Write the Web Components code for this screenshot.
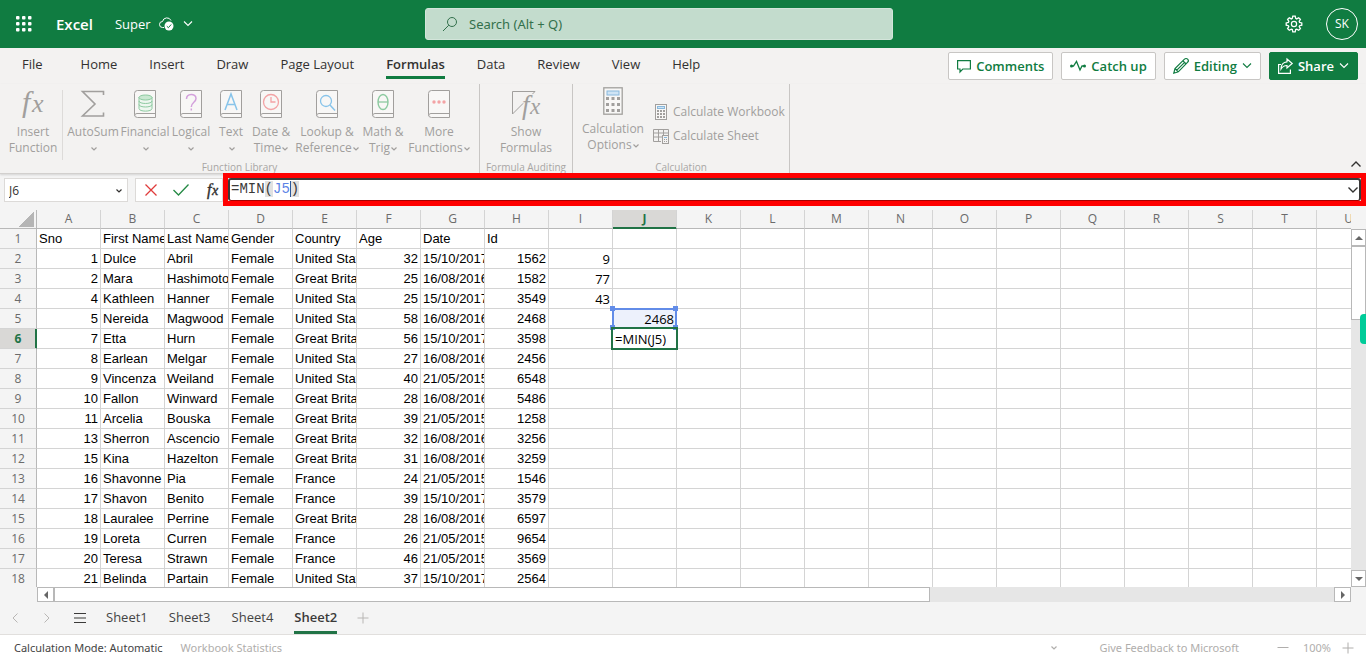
<!DOCTYPE html>
<html lang="en">
<head>
<meta charset="utf-8">
<title>Super - Excel</title>
<style>
html,body{margin:0;height:100%}
body{font:13px/20px "Open Sans","Noto Sans",sans-serif;color:#323130;background:#f3f2f1;overflow:hidden}
xl-app{height:100%}
</style>
</head>
<body>
<xl-app></xl-app>
<script>
class XlElement extends HTMLElement {
  connectedCallback() {
    if (this.shadowRoot) return;
    this.attachShadow({ mode: 'open' }).innerHTML =
      '<style>*{box-sizing:border-box}button{font:inherit;color:inherit;background:none;border:0;padding:0;margin:0}' +
      '[hidden]{display:none}' + this.styles() + '</style>' + this.markup();
  }
  styles() { return ''; }
  markup() { return '<slot></slot>'; }
}

const BOOK = '<path d="M3.5 .5H21.500V27.500H3.500a3 3 0 0 1-3-3V3.500a3 3 0 0 1 3-3zM.5 25.500a2.500 2.500 0 0 1 2.500-2H21.500" stroke="#a19f9d" fill="#f8f7f6"/>';
const ICONS = {
  waffle: [16, 16, [0, 6, 12].map(y => [0, 6, 12].map(x => `<rect x="${x}" y="${y}" width="3.500" height="3.500" rx="1" fill="currentColor" stroke="none"/>`).join('')).join('')],
  cloud: [16, 14, '<path d="M5 10.500H3.500a3 3 0 0 1 0-6A4.500 4.500 0 0 1 12 3.500"/><circle cx="10" cy="9" r="4.500" fill="currentColor" stroke="none"/><path d="M7.800 9.200l1.600 1.500 2.800-3.200" stroke="#107c41"/>'],
  chevron: [10, 6, '<path d="M1 .5L5 4.500 9 .5" stroke-width="1.100"/>'],
  mini: [6, 4, '<path d="M.5 .5L3 3 5.500 .5" stroke-width="1.200"/>'],
  up: [10, 6, '<path d="M.5 5.500L5 1 9.500 5.500" stroke-width="1.400"/>'],
  down: [10, 6, '<path d="M.5 .5L5 5 9.500 .5" stroke-width="1.400"/>'],
  left: [6, 10, '<path d="M5.500 .5L1 5 5.500 9.500"/>'],
  right: [6, 10, '<path d="M.5 .5L5 5 .5 9.500"/>'],
  search: [16, 16, '<circle cx="10" cy="6" r="4.500"/><path d="M6.800 9.200L1 15"/>'],
  gear: [18, 18, '<path d="M7.800 1.200h2.400l.5 2.200 1 .5 2-1.200 1.700 1.700-1.200 2 .4 1 2.200.5v2.300l-2.200.5-.4 1 1.200 2-1.700 1.600-2-1.100-1 .4-.5 2.200H7.800l-.5-2.200-1-.4-2 1.100-1.700-1.600 1.200-2-.4-1-2.200-.5V7.900l2.200-.5.4-1-1.200-2 1.700-1.700 2 1.200 1-.5z" stroke-width="1.300"/><circle cx="9" cy="9" r="2.600" stroke-width="1.200"/>'],
  comment: [14, 14, '<path d="M.6 1.600H13.400V10H5.800L3 13V10H.6z" stroke-width="1.200"/>'],
  pulse: [16, 12, '<path d="M2 6h1.500L6.500 1.500 10 10l2-4h2" stroke-width="1.300"/><circle cx="1.500" cy="6" r="1.500" fill="currentColor" stroke="none"/><circle cx="14.500" cy="6" r="1.500" fill="currentColor" stroke="none"/>'],
  pencil: [16, 16, '<path d="M.8 15.200L2 10.500 11.500 1.200a2 2 0 0 1 3.200 3L5.300 13.800zM10 2.800l3.200 3.200M2 10.500l3.300 3.300M3.800 12.200l7.600-7.600" stroke-width="1.200"/>'],
  share: [15, 16, '<path d="M3 6.500H.6V15.400H12.400V11.500" stroke-width="1.200"/><path d="M9 1l5.200 4.500L9 10V7.500C6.500 7.500 4.500 8.500 3 11c0-4 2.500-7 6-7.200z" stroke-width="1.200"/>'],
  fx: [28, 30, '<text x="3" y="22" font-family="Liberation Serif,serif" font-style="italic" font-size="30" fill="currentColor" stroke="none">f<tspan x="13" font-size="26">x</tspan></text>'],
  fxs: [14, 16, '<text x="2" y="13" font-family="Liberation Serif,serif" font-style="italic" font-size="16" fill="currentColor" stroke="currentColor" stroke-width=".4">f<tspan x="7" font-size="14">x</tspan></text>'],
  sigma: [24, 28, '<path d="M22.500 5V1.500H1.500L14 14 1.500 26H22.500V22.500" stroke-width="1.600"/>'],
  financial: [22, 28, BOOK + '<g stroke="#8ccaa0" fill="#c9e8d1"><path d="M5 7v11.500c0 3.500 13 3.500 13 0V7" fill="#eef7f0"/><ellipse cx="11.500" cy="7.500" rx="6.500" ry="2.500"/><path d="M5 11c0 3.300 13 3.300 13 0M5 14.500c0 3.300 13 3.300 13 0" fill="none"/></g>'],
  logical: [22, 28, BOOK + '<path d="M6.500 9c0-6 9.500-6 9.500-.5 0 4-4.700 3.500-4.700 8.500M11.300 18.500v2" stroke="#d3a0dc" stroke-width="1.500"/>'],
  text: [22, 28, BOOK + '<path d="M5 20L11 4 17 20M7 14.500h8" stroke="#88c4ea" stroke-width="1.500"/>'],
  date: [22, 28, BOOK + '<circle cx="11" cy="12" r="7.500" stroke="#f3a3a5" stroke-width="1.300"/><path d="M11 7v5h4.500" stroke="#f3a3a5" stroke-width="1.300"/>'],
  lookup: [22, 28, BOOK + '<circle cx="10" cy="11" r="5.500" stroke="#88c4ea" stroke-width="1.300"/><path d="M14 15l5 5.500" stroke="#88c4ea" stroke-width="1.500"/>'],
  math: [22, 28, BOOK + '<ellipse cx="11" cy="12" rx="5" ry="7.500" stroke="#8ccaa0" stroke-width="1.400"/><path d="M6 12h10" stroke="#8ccaa0" stroke-width="1.300"/>'],
  more: [22, 28, BOOK + '<g fill="#f3a3a5" stroke="none"><circle cx="6" cy="12" r="1.700"/><circle cx="11" cy="12" r="1.700"/><circle cx="16" cy="12" r="1.700"/></g>'],
  show: [28, 30, '<path d="M.5 1.500H23L.5 24z"/><text x="10" y="24" font-family="Liberation Serif,serif" font-style="italic" font-size="27" fill="#a19f9d" stroke="#f3f2f1" stroke-width="2" paint-order="stroke">f<tspan x="18" font-size="23">x</tspan></text>'],
  calc: [20, 28, '<rect x=".8" y=".8" width="18.400" height="26.400" fill="#f8f7f6" stroke-width="1.300"/><rect x="4" y="4" width="12" height="4" fill="#cfe4f5" stroke="#88b8dc"/>' + [10, 16, 22].map(y => [3, 8.5, 14].map(x => `<rect x="${x}" y="${y}" width="3" height="3" fill="currentColor" stroke="none"/>`).join('')).join('')],
  calcs: [16, 16, '<rect x="2.500" y=".5" width="11" height="15" fill="#f8f7f6"/><rect x="4.500" y="2.500" width="7" height="2" fill="#cfe4f5" stroke="#88b8dc"/>' + [6, 9, 12].map(y => [4, 7, 10].map(x => `<rect x="${x}" y="${y}" width="2" height="2" fill="currentColor" stroke="none"/>`).join('')).join('')],
  sheet: [16, 16, '<path d="M8 13.500H.5V1.500H15.500V7M.5 5H15.500M.5 9H9M5.500 1.500V13.500M10.500 1.500V7"/><rect x="9.500" y="7.500" width="6" height="8"/><path d="M11 9.500h3" stroke="#88b8dc"/><path d="M11 11.500h1M13 11.500h1M11 13.500h1M13 13.500h1"/>'],
  cancel: [12, 12, '<path d="M.5 .5l11 11M11.500 .5l-11 11" stroke-width="1.300"/>'],
  accept: [16, 12, '<path d="M.5 6l5 5L15.500 .5" stroke-width="1.300"/>'],
  menu: [12, 12, '<path d="M0 1.500h12M0 6h12M0 10.500h12" stroke-width="1.200"/>'],
  plus: [12, 12, '<path d="M6 .5v11M.5 6h11"/>'],
  minus: [12, 12, '<path d="M.5 5.500h11"/>'],
  triL: [4, 8, '<path d="M4 0v8L0 4z" fill="currentColor" stroke="none"/>'],
  triR: [4, 8, '<path d="M0 0v8l4-4z" fill="currentColor" stroke="none"/>'],
  triU: [8, 4, '<path d="M0 4h8L4 0z" fill="currentColor" stroke="none"/>'],
  triD: [8, 4, '<path d="M0 0h8L4 4z" fill="currentColor" stroke="none"/>']
};

customElements.define('xl-icon', class extends XlElement {
  styles() { return ':host{display:inline-flex;flex:none}svg{display:block;overflow:visible}'; }
  markup() {
    const [w, h, body] = ICONS[this.getAttribute('name')];
    return `<svg width="${w}" height="${h}" viewBox="0 0 ${w} ${h}" fill="none" stroke="currentColor" aria-hidden="true">${body}</svg>`;
  }
});

customElements.define('xl-header', class extends XlElement {
  styles() { return `
    :host{display:grid;grid-template-columns:425fr 468fr 473fr;align-items:center;height:48px;background:#107c41;color:#fff;flex:none}
    button,.left,.right{display:flex;align-items:center}
    .left{padding-left:16px}
    .left b{font-size:15px;font-weight:600;margin:0 22px 0 24px}
    .file{gap:8px}
    .search{display:flex;align-items:center;gap:11px;height:32px;padding:0 16px;border-radius:3px;background:#c3dccd;color:#33704c;border:1px solid #d3e5da}
    input{flex:1;min-width:0;border:0;padding:0;background:none;font:inherit;font-family:"Noto Sans",sans-serif;color:inherit;outline:0}
    input::placeholder{color:#33704c;opacity:1}
    .right{justify-content:flex-end;gap:23px;padding-right:8px}
    .avatar{justify-content:center;width:32px;height:32px;border:1px solid #fff;border-radius:50%;font-size:12px}`; }
  markup() { return `
    <div class="left"><button aria-label="App launcher"><xl-icon name="waffle"></xl-icon></button><b>Excel</b>
      <button class="file"><span>Super</span><xl-icon name="cloud"></xl-icon><xl-icon name="chevron"></xl-icon></button></div>
    <label class="search"><xl-icon name="search"></xl-icon><input type="text" aria-label="Search" placeholder="Search (Alt + Q)"></label>
    <div class="right"><button aria-label="Settings"><xl-icon name="gear"></xl-icon></button><button class="avatar">SK</button></div>`; }
});

customElements.define('xl-action', class extends XlElement {
  styles() { return `
    :host{display:block}
    button{display:flex;align-items:center;gap:5px;height:28px;padding:0 8px;border:1px solid #c8c6c4;border-radius:2px;background:#fff;color:#107c41;font-weight:600;white-space:nowrap}
    :host([primary]) button{background:#107c41;border-color:#107c41;color:#fff}`; }
  markup() { return `<button><xl-icon name="${this.getAttribute('icon')}"></xl-icon><slot></slot>${this.hasAttribute('menu') ? '<xl-icon name="chevron"></xl-icon>' : ''}</button>`; }
});

customElements.define('xl-tabs', class extends XlElement {
  styles() { return `
    :host{display:flex;justify-content:space-between;height:36px;padding:0 8px 0 22px;flex:none}
    nav{display:flex;gap:32px}
    a{color:#323130;text-decoration:none;padding-top:6px;height:31px;white-space:nowrap;border-bottom:3px solid transparent}
    a:first-child{margin-right:6px}
    a[aria-current]{font-weight:600;border-color:#107c41}
    .actions{display:flex;gap:8px;padding-top:4px}`; }
  markup() {
    const tabs = ['File', 'Home', 'Insert', 'Draw', 'Page Layout', 'Formulas', 'Data', 'Review', 'View', 'Help'];
    return `<nav>${tabs.map(t => `<a href="#"${t === 'Formulas' ? ' aria-current="page"' : ''}>${t}</a>`).join('')}</nav>
    <div class="actions"><xl-action icon="comment">Comments</xl-action><xl-action icon="pulse">Catch up</xl-action>
    <xl-action icon="pencil" menu>Editing</xl-action><xl-action icon="share" menu primary>Share</xl-action></div>`;
  }
});

customElements.define('xl-tool', class extends XlElement {
  styles() { return `
    :host{display:block;flex:none;width:var(--w,40px)}
    button{display:flex;flex-direction:column;align-items:center;width:100%;gap:4px}
    xl-icon.big{height:30px}
    .label{display:block;line-height:16px;text-align:center;white-space:nowrap}
    .label xl-icon{vertical-align:middle;margin-left:1px}
    :host([row]) button{flex-direction:row;height:24px}`; }
  markup() {
    const lines = this.getAttribute('label').split('|');
    const menu = this.hasAttribute('menu') ? '<xl-icon name="mini"></xl-icon>' : '';
    return `<button><xl-icon class="${this.hasAttribute('row') ? '' : 'big'}" name="${this.getAttribute('icon')}"></xl-icon><span class="label">${lines.join('<br>')}${menu}</span></button>`;
  }
});

customElements.define('xl-group', class extends XlElement {
  styles() { return `
    :host{display:flex;flex-direction:column;justify-content:space-between;height:89px;border-right:1px solid #c8c6c4;flex:none}
    .tools{display:flex;padding:6px 4px 0}
    .name{font-size:10px;line-height:12px;text-align:center;white-space:nowrap;color:#a8a6a4}`; }
  markup() { return `<div class="tools"><slot></slot></div><div class="name">${this.getAttribute('label')}</div>`; }
});

customElements.define('xl-ribbon', class extends XlElement {
  styles() { return `
    :host{display:flex;height:90px;font-size:12px;color:#a19f9d;border-bottom:1px solid #d2d0ce;box-shadow:0 1px 2px #0002;flex:none;position:relative}
    .divider{width:1px;height:70px;margin-right:4px;background:#dddbd9;flex:none}
    .stack{display:flex;flex-direction:column;padding:10px 0 0 4px;--w:132px}
    .calc{margin-top:-3px}
    .collapse{margin-left:auto;align-self:flex-end;padding:0 5px 0;color:#323130}`; }
  markup() { return `
    <xl-group label="Function Library">
      <xl-tool icon="fx" label="Insert|Function" style="--w:58px"></xl-tool><div class="divider"></div>
      <xl-tool icon="sigma" label="AutoSum|" menu style="--w:52px"></xl-tool>
      <xl-tool icon="financial" label="Financial|" menu style="--w:52px"></xl-tool>
      <xl-tool icon="logical" label="Logical|" menu></xl-tool>
      <xl-tool icon="text" label="Text|" menu></xl-tool>
      <xl-tool icon="date" label="Date &amp;|Time" menu></xl-tool>
      <xl-tool icon="lookup" label="Lookup &amp;|Reference" menu style="--w:72px"></xl-tool>
      <xl-tool icon="math" label="Math &amp;|Trig" menu></xl-tool>
      <xl-tool icon="more" label="More|Functions" menu style="--w:72px"></xl-tool>
    </xl-group>
    <xl-group label="Formula Auditing"><xl-tool icon="show" label="Show|Formulas" style="--w:84px"></xl-tool></xl-group>
    <xl-group label="Calculation">
      <xl-tool class="calc" icon="calc" label="Calculation|Options" menu style="--w:72px"></xl-tool>
      <div class="stack"><xl-tool row icon="calcs" label="Calculate Workbook"></xl-tool><xl-tool row icon="sheet" label="Calculate Sheet"></xl-tool></div>
    </xl-group>
    <button class="collapse" aria-label="Collapse ribbon"><xl-icon name="up"></xl-icon></button>`; }
});

customElements.define('xl-formula-bar', class extends XlElement {
  styles() { return `
    :host{display:flex;align-items:flex-start;height:36px;padding:4px 0 0 4px;background:#f4f4f4;flex:none}
    .name,.tools{display:flex;align-items:center;height:24px;background:#fff;border:1px solid #dcdad8}
    .tools button,.formula button{display:flex}
    .name{width:124px;padding:1px 5px 0 4px;margin-right:7px}
    input{flex:1;min-width:0;border:0;padding:0;outline:0;font:12px/20px "Open Sans",sans-serif;color:#323130}
    .tools{width:88px;padding-left:9px;gap:16px}
    .no{color:#e03b3b}.yes{color:#258a45}
    .formula{position:relative;flex:1;min-width:0;display:flex;align-items:center;height:23px;margin:0 5px;padding:0 1px;background:#fff;border:2px solid #3b3a39;border-bottom:1px solid #a80000;border-radius:3px}
    .formula::after{content:"";position:absolute;inset:-7px -7px -6px;border:5px solid #f00;pointer-events:none}
    .text{flex:1;font:14px/18px "Liberation Mono",monospace;color:#3b3a39;outline:0;white-space:pre;align-self:flex-start}
    .paren{background:#e1e1e1}.ref{color:#5b83e6;border-right:1px solid #2b579a}`; }
  markup() { return `
    <div class="name"><input type="text" aria-label="Name Box" value="J6"><xl-icon name="mini"></xl-icon></div>
    <div class="tools"><button class="no" aria-label="Cancel"><xl-icon name="cancel"></xl-icon></button>
      <button class="yes" aria-label="Enter"><xl-icon name="accept"></xl-icon></button>
      <button aria-label="Insert function"><xl-icon name="fxs"></xl-icon></button></div>
    <div class="formula"><div class="text" role="textbox" contenteditable="true" spellcheck="false" aria-label="Formula bar">=MIN<span class="paren">(</span><span class="ref">J5</span><span class="paren">)</span></div>
      <button aria-label="Expand formula bar"><xl-icon name="down"></xl-icon></button></div>`; }
});

const U = 'United States', G = 'Great Britain', FR = 'France';
const OCT = '15/10/2017', AUG = '16/08/2016', MAY = '21/05/2015';
const ROWS = [
  ['Sno', 'First Name', 'Last Name', 'Gender', 'Country', 'Age', 'Date', 'Id'],
  [1, 'Dulce', 'Abril', 'Female', U, 32, OCT, 1562, 9],
  [2, 'Mara', 'Hashimoto', 'Female', G, 25, AUG, 1582, 77],
  [4, 'Kathleen', 'Hanner', 'Female', U, 25, OCT, 3549, 43],
  [5, 'Nereida', 'Magwood', 'Female', U, 58, AUG, 2468, '', 2468],
  [7, 'Etta', 'Hurn', 'Female', G, 56, OCT, 3598, '', '=MIN(J5)'],
  [8, 'Earlean', 'Melgar', 'Female', U, 27, AUG, 2456],
  [9, 'Vincenza', 'Weiland', 'Female', U, 40, MAY, 6548],
  [10, 'Fallon', 'Winward', 'Female', G, 28, AUG, 5486],
  [11, 'Arcelia', 'Bouska', 'Female', G, 39, MAY, 1258],
  [13, 'Sherron', 'Ascencio', 'Female', G, 32, AUG, 3256],
  [15, 'Kina', 'Hazelton', 'Female', G, 31, AUG, 3259],
  [16, 'Shavonne', 'Pia', 'Female', FR, 24, MAY, 1546],
  [17, 'Shavon', 'Benito', 'Female', FR, 39, OCT, 3579],
  [18, 'Lauralee', 'Perrine', 'Female', G, 28, AUG, 6597],
  [19, 'Loreta', 'Curren', 'Female', FR, 26, MAY, 9654],
  [20, 'Teresa', 'Strawn', 'Female', FR, 46, MAY, 3569],
  [21, 'Belinda', 'Partain', 'Female', U, 37, OCT, 2564]
];
const COLS = 'ABCDEFGHIJKLMNOPQRSTU'.split('');

customElements.define('xl-grid', class extends XlElement {
  styles() { return `
    :host{display:grid;grid-template-columns:minmax(0,1fr) 15px;grid-template-rows:minmax(0,1fr) 15px;flex:1;min-height:0;background:#f4f4f4;position:relative}
    .view{overflow:hidden}
    table{table-layout:fixed;border-collapse:separate;border-spacing:0;width:1381px;background:#fff;font:13px/18px "Liberation Sans",Arial,sans-serif;color:#000}
    th,td{padding:1px 2px 0;height:20px;border:solid #d4d4d4;border-width:0 1px 1px 0;overflow:hidden;white-space:nowrap;text-align:left}
    th{background:#f4f4f4;color:#6b6b6b;font:12px/18px "Open Sans",sans-serif;text-align:center}
    thead th{height:19px;padding:0;border-bottom-color:#b8b8b8}
    tbody th,.corner{border-right-color:#b8b8b8}
    thead .corner{padding-right:2px}
    .corner i{display:block;margin:1px 0 1px auto;width:15px;height:15px;background:linear-gradient(135deg,#0000 50%,#b5b5b5 50%)}
    th.on{background:#d9d8d6;color:#217346;font-weight:700}
    thead th.on{box-shadow:inset 0 -1px #217346;border-bottom-color:#217346}
    tbody th.on{box-shadow:inset -1px 0 #217346;border-right-color:#217346}
    .num{text-align:right}
    .ui{font-family:"Open Sans",sans-serif}
    .ref,.edit{overflow:visible;position:relative;font-family:"Open Sans",sans-serif}
    .ref{background:#edf1fc}
    .ref::after{content:"";position:absolute;inset:-1px;border:2px solid #628ce8}
    .ref i{position:absolute;width:5px;height:5px;background:#628ce8}
    .ref i:nth-of-type(1){left:-3px;top:-3px}.ref i:nth-of-type(2){right:-2px;top:-3px}
    .ref i:nth-of-type(3){left:-3px;bottom:-2px}.ref i:nth-of-type(4){right:-2px;bottom:-2px}
    .edit::before{content:"";position:absolute;inset:-2px;border:2px solid #217346}
    .bar{display:flex;background:#e6e6e6;color:#666}
    .bar div,.bar button{background:#fff;border:1px solid #b8b8b8;display:flex;align-items:center;justify-content:center;flex:none}
    .v{flex-direction:column;margin-top:19px}
    .v button{height:17px}.v .thumb{height:74px}
    .h{margin-left:37px}
    .h button{width:17px}.h .thumb{flex:0 0 876fr;width:calc(66% + 9px);flex-basis:auto}
    .h button:last-child{margin-left:auto}
    .v button:last-child{margin-top:auto}
    .handle{position:absolute;right:0;top:104px;width:6px;height:30px;border-radius:4px 0 0 4px;background:#00cc99}`; }
  cell(v, c, r) {
    if (c === 9 && r === 4) return `<td class="num ref">${v}<i></i><i></i><i></i><i></i></td>`;
    if (c === 9 && r === 5) return `<td class="edit">${v}</td>`;
    return `<td class="${typeof v === 'number' ? 'num' : ''}${c === 8 ? ' ui' : ''}">${v}</td>`;
  }
  markup() { return `
    <div class="view"><table><colgroup><col style="width:37px">${'<col>'.repeat(COLS.length)}</colgroup>
    <thead><tr><th class="corner"><i></i></th>${COLS.map(c => `<th scope="col"${c === 'J' ? ' class="on"' : ''}>${c}</th>`).join('')}</tr></thead>
    <tbody>${ROWS.map((row, r) => `<tr><th scope="row"${r === 5 ? ' class="on"' : ''}>${r + 1}</th>${COLS.map((_, c) => this.cell(row[c] ?? '', c, r)).join('')}</tr>`).join('')}</tbody></table></div>
    <div class="bar v"><button aria-label="Scroll up"><xl-icon name="triU"></xl-icon></button><div class="thumb"></div><button aria-label="Scroll down"><xl-icon name="triD"></xl-icon></button></div>
    <div class="bar h"><button aria-label="Scroll left"><xl-icon name="triL"></xl-icon></button><div class="thumb"></div><button aria-label="Scroll right"><xl-icon name="triR"></xl-icon></button></div>
    <div class="handle"></div>`; }
});

customElements.define('xl-sheets', class extends XlElement {
  styles() { return `
    :host{display:flex;align-items:center;height:32px;padding-left:12px;background:#f4f4f4;color:#3b3a39;flex:none}
    .dim{color:#b8b6b4}
    .nav{display:flex;align-items:center;gap:26px;margin-right:20px}
    .all{margin-left:-2px}
    nav{display:flex;gap:21px;margin-right:20px}
    a{color:#444;text-decoration:none;height:32px;padding-top:5px;border-bottom:3px solid transparent}
    a[aria-current]{font-weight:600;border-color:#217346;color:#3b3a39}
    button{display:flex}`; }
  markup() { return `
    <div class="nav"><button class="dim" aria-label="Previous sheet"><xl-icon name="left"></xl-icon></button><button class="dim" aria-label="Next sheet"><xl-icon name="right"></xl-icon></button>
    <button class="all" aria-label="All sheets"><xl-icon name="menu"></xl-icon></button></div>
    <nav>${['Sheet1', 'Sheet3', 'Sheet4', 'Sheet2'].map(s => `<a href="#"${s === 'Sheet2' ? ' aria-current="page"' : ''}>${s}</a>`).join('')}</nav>
    <button class="dim" aria-label="New sheet"><xl-icon name="plus"></xl-icon></button>`; }
});

customElements.define('xl-status', class extends XlElement {
  styles() { return `
    :host{display:flex;align-items:center;height:23px;padding:3px 12px 0 14px;border-top:1px solid #e1dfdd;background:#fff;font-family:"Noto Sans",sans-serif;font-size:11px;color:#444;flex:none;white-space:nowrap}
    button{display:flex;align-items:center;color:#b0aeac}
    .stats{margin-left:18px}.more{margin-left:auto}
    .feedback{margin:0 38px 0 42px}
    .zoom{margin:0 11px 0 14px}`; }
  markup() { return `
    <span>Calculation Mode: Automatic</span><button class="stats">Workbook Statistics</button>
    <button class="more" aria-label="More"><xl-icon name="mini"></xl-icon></button><button class="feedback">Give Feedback to Microsoft</button>
    <button aria-label="Zoom out"><xl-icon name="minus"></xl-icon></button><button class="zoom">100%</button><button aria-label="Zoom in"><xl-icon name="plus"></xl-icon></button>`; }
});

customElements.define('xl-app', class extends XlElement {
  styles() { return ':host{display:flex;flex-direction:column}'; }
  markup() { return '<xl-header></xl-header><xl-tabs></xl-tabs><xl-ribbon></xl-ribbon><xl-formula-bar></xl-formula-bar><xl-grid></xl-grid><xl-sheets></xl-sheets><xl-status></xl-status>'; }
});
</script>
</body>
</html>
